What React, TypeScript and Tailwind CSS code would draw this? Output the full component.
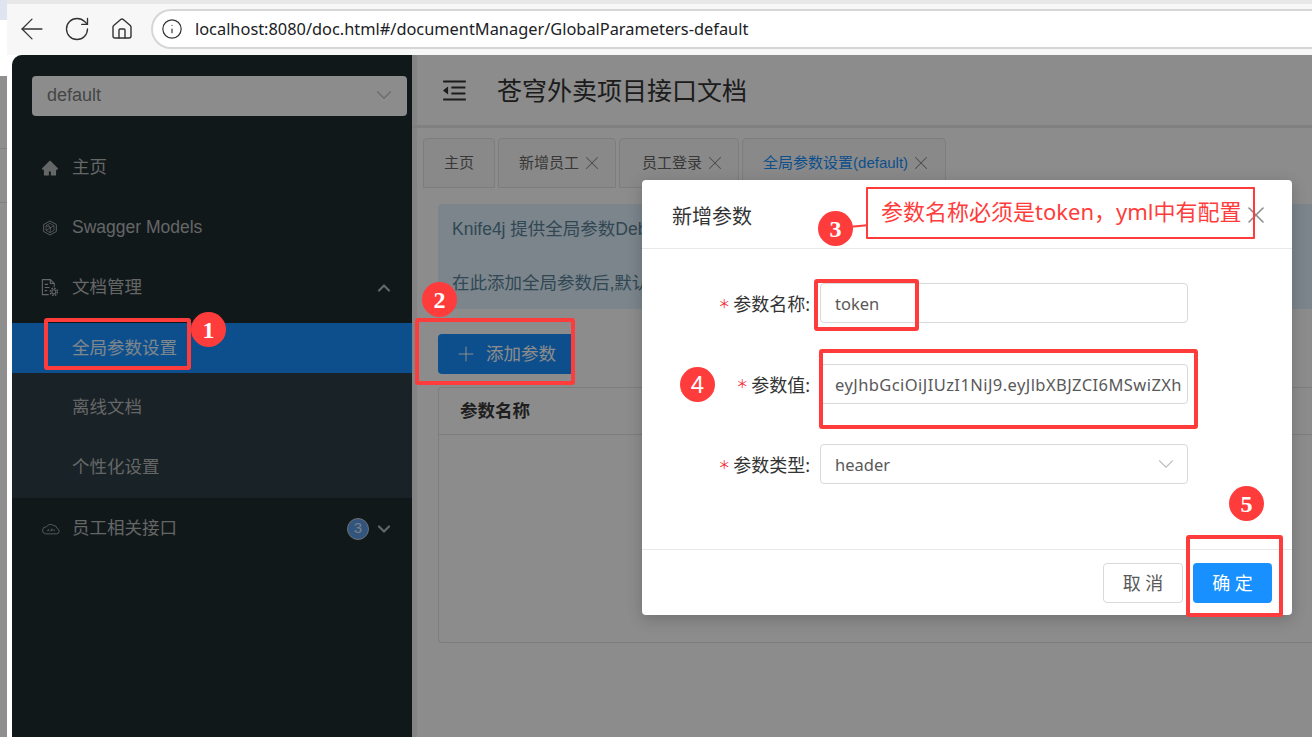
import { ArrowLeft, ChevronDown, ChevronUp, House, Info, Plus, RotateCw, X } from "lucide-react";
import { AiFillHome, AiOutlineMenuFold } from "react-icons/ai";

const SANS = "font-['Liberation_Sans','Noto_Sans_CJK_SC',sans-serif]";
const UI = "font-['Noto_Sans','Noto_Sans_CJK_SC',sans-serif]";

function Marker({ n, className, sans }: { n: number; className: string; sans?: boolean }) {
  return (
    <div
      className={`absolute flex size-[35px] items-center justify-center rounded-full bg-[#ff3c3c] text-[24px] leading-none text-white ${sans ? "font-['Liberation_Sans',sans-serif]" : "font-['Liberation_Serif',serif] font-bold"} ${className}`}
    >
      {n}
    </div>
  );
}

function Frame({ className }: { className: string }) {
  return <div className={`absolute rounded-[3px] border-[4px] border-[#ff3c3c] ${className}`} />;
}

function NavItem({ icon, label, children }: { icon?: React.ReactNode; label: string; children?: React.ReactNode }) {
  return (
    <div className="flex h-[60px] items-center pl-[30px] pr-[22px] pt-[1px] text-[17.5px] text-[#b8babb]">
      <span className="flex w-[30px] shrink-0 items-center">{icon}</span>
      <span>{label}</span>
      {children}
    </div>
  );
}

function CloudApi() {
  return (
    <svg viewBox="0 0 20 12" className="h-[12px] w-[18px]" fill="none" stroke="currentColor" strokeWidth="0.9">
      <path d="M4 11.4h12.2a3 3 0 0 0 .6-5.9A4.2 4.2 0 0 0 12.6 2 5 5 0 0 0 5 3.6 3.9 3.9 0 0 0 4 11.4Z" />
      <path d="M6 8.6l1-2.4 1 2.4M10 8.6V6.2h1.2a.7.7 0 0 1 0 1.5H10M13.6 6.2v2.4" strokeWidth="0.7" />
    </svg>
  );
}

function ModelsIcon() {
  return (
    <svg viewBox="0 0 24 24" className="size-[16px]" fill="none" stroke="currentColor" strokeWidth="1.3">
      <path d="M12 1.5l9.5 5.3v10.4L12 22.5l-9.5-5.3V6.8z" />
      <path d="M12 5l6 3.5v7L12 19l-6-3.5v-7zM6 8.5l7 3 5-3M13 11.5L12 19M13 11.5L9 6.8M6 15.5l7-4" strokeWidth="1" />
    </svg>
  );
}

function DocGearIcon() {
  return (
    <svg viewBox="0 0 24 24" className="-ml-[2px] size-[19px]" fill="none" stroke="currentColor" strokeWidth="1.4">
      <path d="M11 21H3V2h10l5 5v4" />
      <path d="M13 2v5h5M6 8h4M6 12h6M6 16h3" />
      <circle cx="17.5" cy="17.5" r="2.6" />
      <circle cx="17.5" cy="17.5" r="4.6" strokeWidth="1.8" strokeDasharray="2 1.6" />
    </svg>
  );
}

function Tab({ label, active, closable, className }: { label: string; active?: boolean; closable?: boolean; className?: string }) {
  return (
    <div
      className={`flex h-[50px] items-center rounded-t-[4px] border border-[#e4e4e4] bg-[#fafafa] text-[15px] ${active ? "text-[#1890ff]" : "text-[#666666]"} ${closable ? "gap-[2px] pr-[12px]" : "pr-[20px]"} ${className ?? "pl-[20px]"}`}
    >
      <span>{label}</span>
      {closable && <X className="size-[22px] text-[#8a8a8a]" strokeWidth={1.1} />}
    </div>
  );
}

function Field({ label, children }: { label: string; children: React.ReactNode }) {
  return (
    <div className="flex h-[40px] items-center">
      <div className="flex w-[168px] items-center justify-end pt-[3px] text-[18px] text-[#333333]">
        <span className="mr-[3px] text-[12px] text-[#f5222d]">＊</span>
        {label}:
      </div>
      <div className="ml-[10px] flex h-[40px] w-[368px] items-center justify-between rounded-[4px] border border-[#d9d9d9] bg-white pl-[14px] pr-[14px] pt-[3px] text-[16.5px] text-[#595959]">
        {children}
      </div>
    </div>
  );
}

export default function App() {
  return (
    <div className={`relative flex h-[737px] w-[1312px] overflow-hidden bg-white ${UI}`}>
      {/* window behind the browser */}
      <div className="flex w-[7px] shrink-0 flex-col">
        <div className="h-[20px] bg-[#dfe5f0]" />
        <div className="h-[56px] bg-white" />
        <div className="h-[73px] border-b border-[#808080] bg-[#8f8f8f]" />
        <div className="h-[54px] border-b border-[#808080] bg-[#8f8f8f]" />
        <div className="flex-1 bg-[#8f8f8f]" />
      </div>

      <div className="flex min-w-0 flex-1 flex-col">
        {/* browser bar */}
        <div className="h-[55px] shrink-0 bg-[#f7f7f7]">
          <div className="h-[4px] bg-[#e8e8e8]" />
          <div className="flex h-[51px] items-center pb-[1px] pl-[8px]">
            <ArrowLeft className="size-[34px] text-[#333333]" strokeWidth={0.9} />
            <RotateCw className="ml-[14px] size-[28px] text-[#333333]" strokeWidth={1.15} />
            <House className="ml-[19px] size-[24px] text-[#333333]" strokeWidth={1.4} />
            <div className="ml-[17px] flex h-[40px] flex-1 items-center rounded-l-full border-y-2 border-l-2 border-[#d6d6d6] bg-white pl-[8px]">
              <Info className="size-[22px] text-[#333333]" strokeWidth={1.3} />
              <span className="ml-[12px] pt-[1px] text-[16.37px] text-[#202124]">localhost:8080/doc.html#/documentManager/GlobalParameters-default</span>
            </div>
          </div>
        </div>

        <div className="flex min-h-0 flex-1 border-l-[5px] border-white">
          {/* sidebar */}
          <aside className={`w-[400px] shrink-0 rounded-tl-[10px] bg-[#1f2c31] ${SANS}`}>
            <div className="px-[20px] pt-[21px]">
              <div className="flex h-[40px] w-[375px] items-center justify-between rounded-[4px] bg-white pb-[2px] pl-[15px] pr-[10px] text-[18px] text-[#808080]">
                <span>default</span>
                <ChevronDown className="size-[26px] text-[#c0c0c0]" strokeWidth={1} />
              </div>
            </div>
            <div className="pt-[21px]">
              <NavItem icon={<AiFillHome className="-ml-[1px] size-[18px]" />} label="主页" />
              <NavItem icon={<ModelsIcon />} label="Swagger Models" />
              <NavItem icon={<DocGearIcon />} label="文档管理">
                <ChevronUp className="-mr-[4px] ml-auto size-[20px]" strokeWidth={2.6} />
              </NavItem>
              <div className="mt-[6px] flex h-[50px] items-center bg-[#1890ff] pl-[60px] pt-[1px] text-[17.5px] text-white/90">全局参数设置</div>
              <div className="h-[125px] bg-[#2f3e45] pt-[4px]">
                <NavItem label="离线文档" />
                <NavItem label="个性化设置" />
              </div>
              <NavItem icon={<CloudApi />} label="员工相关接口">
                <span className="ml-auto flex size-[22px] items-center justify-center rounded-full border border-[#c9cbcc] bg-[#5b9bea] text-[15px] text-[#dce6f0]">3</span>
                <ChevronDown className="-mr-[4px] ml-[5px] size-[20px]" strokeWidth={2.6} />
              </NavItem>
            </div>
          </aside>

          {/* main */}
          <main className="flex min-w-0 flex-1 flex-col border-l-[5px] border-[#f0f0f0] bg-white">
            <header className="-ml-[5px] flex h-[73px] shrink-0 items-center border-b-[3px] border-[#e9e9e9] pl-[28px] text-[#333333]">
              <AiOutlineMenuFold className="size-[29px]" />
              <h1 className="ml-[28px] text-[25px] font-normal leading-none">苍穹外卖项目接口文档</h1>
            </header>
            <div className={`flex flex-1 flex-col pl-[6px] ${SANS}`}>
              <div className="flex gap-[3px] pt-[10px]">
                <Tab label="主页" />
                <Tab label="新增员工" closable />
                <Tab label="员工登录" closable className="pl-[22px]" />
                <Tab label="全局参数设置(default)" active closable className="pl-[20px] pr-[13px]" />
              </div>
              <div className="ml-[15px] flex flex-col gap-[17px]">
                <div className="mt-[16px] h-[105px] rounded-l-[4px] bg-[#e0f3fd] pl-[14px] pt-[7px] text-[17.5px] leading-[36px] text-[#5a8299]">
                  <p>Knife4j 提供全局参数Debug功能,目前默认提供header(请求头)、query(form)两种方式的入参.</p>
                  <p className="mt-[18px]">在此添加全局参数后,默认Debug调试tab页会带上该参数</p>
                </div>
                <div className="-mt-[5px] flex h-[53px] items-end">
                  <button className="flex h-[40px] w-[136px] items-center rounded-[4px] bg-[#1890ff] pl-[16px] text-[17.5px] text-white">
                    <Plus className="size-[24px]" strokeWidth={1} />
                    <span className="ml-[8px]">添加参数</span>
                  </button>
                </div>
              </div>
              <div className="ml-[15px] mt-[13px] h-[256px] rounded-l-[4px] border-y border-l border-[#e4e4e4]">
                <div className="flex h-[47px] items-center border-b border-[#e4e4e4] pl-[21px] text-[17.5px] font-bold text-[#3a3a3a]">参数名称</div>
              </div>
            </div>
          </main>
        </div>
      </div>

      {/* dimming mask */}
      <div className="absolute bottom-0 left-[12px] right-0 top-[55px] rounded-tl-[10px] bg-black/45" />

      {/* modal */}
      <div className="absolute left-[642px] top-[180px] flex h-[435px] w-[650px] flex-col rounded-[4px] bg-white shadow-[0_4px_16px_rgba(0,0,0,0.2)]">
        <div className="flex h-[69px] shrink-0 items-center justify-between border-b border-[#e8e8e8] pl-[30px] pr-[22px]">
          <span className="pt-[5px] text-[20px] text-[#333333]">新增参数</span>
          <X className="mt-[2px] size-[28px] text-[#8c8c8c]" strokeWidth={1.4} />
        </div>
        <div className="flex flex-1 flex-col gap-[40.5px] pt-[34px]">
          <Field label="参数名称">
            <span>token</span>
          </Field>
          <Field label="参数值">
            <span className="whitespace-nowrap tracking-[0.42px]">eyJhbGciOiJIUzI1NiJ9.eyJlbXBJZCI6MSwiZXh</span>
          </Field>
          <Field label="参数类型">
            <span>header</span>
            <ChevronDown className="-mr-[6px] -mt-[3px] size-[26px] text-[#bfbfbf]" strokeWidth={1} />
          </Field>
        </div>
        <div className="flex h-[66px] shrink-0 items-center justify-end gap-[10px] border-t border-[#e8e8e8] pr-[20px]">
          <button className="h-[40px] w-[80px] rounded-[4px] border border-[#d9d9d9] bg-white pt-[1px] text-[18px] text-[#595959]">取 消</button>
          <button className="h-[40px] w-[79px] rounded-[4px] bg-[#1890ff] pt-[1px] text-[18px] text-white">确 定</button>
        </div>
      </div>

      {/* annotations */}
      <Frame className="left-[44px] top-[318px] h-[52px] w-[147px]" />
      <Marker n={1} className="left-[191px] top-[312px]" />
      <Frame className="left-[415px] top-[318px] h-[67px] w-[160px]" />
      <Marker n={2} className="left-[422px] top-[282px]" />
      <div className="absolute left-[851px] top-[225px] h-[2px] w-[16px] -rotate-6 bg-[#ff3c3c]" />
      <Marker n={3} className="left-[818px] top-[211px]" />
      <div className="absolute left-[866px] top-[187px] flex h-[52px] w-[389px] items-center whitespace-nowrap rounded-[1px] border-2 border-[#ff3c3c] pb-[4px] pl-[13px] text-[22px] text-[#ff3c3c]">
        参数名称必须是token，yml中有配置
      </div>
      <Frame className="left-[814px] top-[279px] h-[52px] w-[105px]" />
      <Frame className="left-[819px] top-[349px] h-[80px] w-[379px]" />
      <Marker n={4} sans className="left-[680px] top-[367px]" />
      <Marker n={5} className="left-[1229px] top-[486px]" />
      <Frame className="left-[1186px] top-[535px] h-[82px] w-[97px]" />
    </div>
  );
}
